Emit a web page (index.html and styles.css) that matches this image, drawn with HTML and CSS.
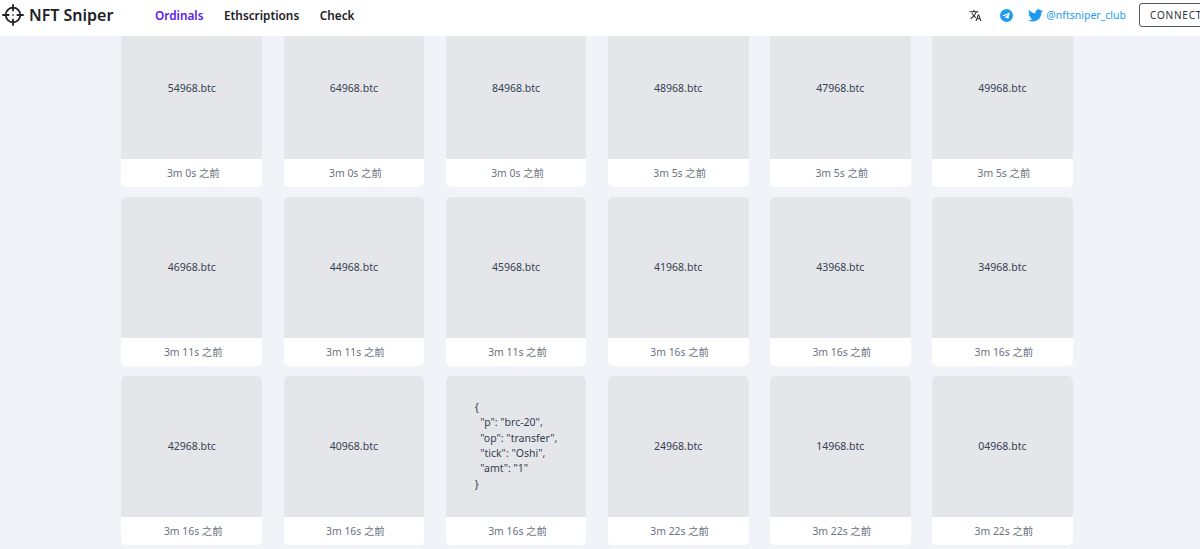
FILE: index.html
```html
<!DOCTYPE html>
<html lang="zh-CN">
<head>
  <meta charset="UTF-8" />
  <meta name="viewport" content="width=device-width, initial-scale=1.0"/>
  <title>NFT Sniper</title>
  <link rel="stylesheet" href="styles.css">
</head>
<body>

  <header class="header">
    <a class="logo" href="#">
      <svg class="logo-icon" viewBox="0 0 22 22" fill="none" stroke="#202124" stroke-width="1.8">
        <circle cx="11" cy="11" r="7.3"/>
        <path d="M11 .3v7M11 14.7v7M.3 11h7M14.7 11h7"/>
        <path d="M11 10.3v1.4" stroke-width="1.4"/>
      </svg>
      <span class="logo-text">NFT Sniper</span>
    </a>

    <nav class="nav">
      <a class="nav-link active" href="#">Ordinals</a>
      <a class="nav-link" href="#">Ethscriptions</a>
      <a class="nav-link" href="#">Check</a>
    </nav>

    <div class="tools">
      <svg class="icon-lang" viewBox="0 0 24 24" fill="#202124">
        <path d="M12.87 15.07l-2.54-2.51.03-.03c1.74-1.94 2.98-4.17 3.71-6.53H17V4h-7V2H8v2H1v1.99h11.17C11.5 7.92 10.44 9.75 9 11.35 8.07 10.32 7.3 9.19 6.69 8h-2c.73 1.63 1.73 3.17 2.98 4.56l-5.09 5.02L4 19l5-5 3.11 3.11.76-2.04zM18.5 10h-2L12 22h2l1.12-3h4.75L21 22h2l-4.500-12zm-2.620 7l1.620-4.330L19.120 17h-3.240z"/>
      </svg>
      <svg class="icon-telegram" viewBox="0 0 24 24">
        <circle cx="12" cy="12" r="12" fill="#1d9bf0"/>
        <path fill="#fff" d="M4.900 11.700l12-4.800c.7-.3 1.200.1 1 1l-2 9.400c-.1.700-.6.900-1.200.500l-3-2.200-1.500 1.400c-.2.200-.3.300-.6.300l.2-3.100 5.600-5.100c.3-.2 0-.4-.3-.2l-7 4.400-3-.900c-.7-.2-.7-.5-.2-.7z"/>
      </svg>
      <a class="twitter" href="#">
        <svg class="icon-twitter" viewBox="0 0 24 24" fill="#1d9bf0">
          <path d="M23.953 4.570a10 10 0 01-2.825.775 4.958 4.958 0 002.163-2.723c-.951.555-2.005.959-3.127 1.184a4.920 4.920 0 00-8.384 4.482C7.690 8.095 4.067 6.130 1.640 3.162a4.822 4.822 0 00-.666 2.475c0 1.710.870 3.213 2.188 4.096a4.904 4.904 0 01-2.228-.616v.060a4.923 4.923 0 003.946 4.827 4.996 4.996 0 01-2.212.085 4.936 4.936 0 004.604 3.417 9.867 9.867 0 01-6.102 2.105c-.390 0-.779-.023-1.170-.067a13.995 13.995 0 007.557 2.209c9.053 0 13.998-7.496 13.998-13.985 0-.210 0-.420-.015-.630A9.935 9.935 0 0024 4.590z"/>
        </svg>
        <span>@nftsniper_club</span>
      </a>
      <button class="connect">CONNECT</button>
    </div>
  </header>

  <main class="grid">
    <div class="card"><div class="preview">54968.btc</div><div class="time">3m 0s 之前</div></div>
    <div class="card"><div class="preview">64968.btc</div><div class="time">3m 0s 之前</div></div>
    <div class="card"><div class="preview">84968.btc</div><div class="time">3m 0s 之前</div></div>
    <div class="card"><div class="preview">48968.btc</div><div class="time">3m 5s 之前</div></div>
    <div class="card"><div class="preview">47968.btc</div><div class="time">3m 5s 之前</div></div>
    <div class="card"><div class="preview">49968.btc</div><div class="time">3m 5s 之前</div></div>

    <div class="card"><div class="preview">46968.btc</div><div class="time">3m 11s 之前</div></div>
    <div class="card"><div class="preview">44968.btc</div><div class="time">3m 11s 之前</div></div>
    <div class="card"><div class="preview">45968.btc</div><div class="time">3m 11s 之前</div></div>
    <div class="card"><div class="preview">41968.btc</div><div class="time">3m 16s 之前</div></div>
    <div class="card"><div class="preview">43968.btc</div><div class="time">3m 16s 之前</div></div>
    <div class="card"><div class="preview">34968.btc</div><div class="time">3m 16s 之前</div></div>

    <div class="card"><div class="preview">42968.btc</div><div class="time">3m 16s 之前</div></div>
    <div class="card"><div class="preview">40968.btc</div><div class="time">3m 16s 之前</div></div>
    <div class="card">
      <div class="preview"><pre class="json">{
  "p": "brc-20",
  "op": "transfer",
  "tick": "Oshi",
  "amt": "1"
}</pre></div>
      <div class="time">3m 16s 之前</div>
    </div>
    <div class="card"><div class="preview">24968.btc</div><div class="time">3m 22s 之前</div></div>
    <div class="card"><div class="preview">14968.btc</div><div class="time">3m 22s 之前</div></div>
    <div class="card"><div class="preview">04968.btc</div><div class="time">3m 22s 之前</div></div>
  </main>

</body>
</html>
```

FILE: styles.css
```css
* {
  box-sizing: border-box;
}
body {
  margin: 0;
  height: 549px;
  overflow: hidden;
  background: #f2f3f8;
  font-family: "Segoe UI", "Noto Sans", "Noto Sans CJK SC", sans-serif;
  font-size: 11px;
  color: #374151;
}
a {
  color: inherit;
  text-decoration: none;
}
svg {
  display: block;
  flex: none;
}
.header {
  position: fixed;
  top: 0;
  left: 0;
  z-index: 10;
  display: flex;
  align-items: center;
  width: 1216px;
  height: 36px;
  padding: 0 0 6px 2px;
  background: #fff;
  color: #202124;
}
.logo {
  display: flex;
  align-items: center;
  width: 153px;
}
.logo-icon {
  width: 22px;
  height: 22px;
  margin-right: 5px;
}
.logo-text {
  font-size: 16px;
  font-weight: 600;
  white-space: nowrap;
}
.nav {
  display: flex;
  gap: 20.5px;
  font-size: 11.8px;
  font-weight: 600;
}
.nav-link.active {
  color: #5b21f0;
}
.tools {
  display: flex;
  align-items: center;
  margin-left: auto;
}
.icon-lang {
  width: 13px;
  height: 13px;
  margin-right: 18px;
}
.icon-telegram {
  width: 13px;
  height: 13px;
  margin-right: 15px;
}
.twitter {
  display: flex;
  align-items: center;
  gap: 3px;
  margin-right: 13px;
  font-size: 10.5px;
  color: #1d9bf0;
}
.icon-twitter {
  width: 15px;
  height: 15px;
}
.connect {
  width: 77px;
  height: 24px;
  padding: 0 0 0 10px;
  border: 1px solid #55585c;
  border-radius: 3px;
  background: #fff;
  font-family: inherit;
  font-size: 10px;
  letter-spacing: 0.8px;
  text-align: left;
  color: #303236;
}
.grid {
  display: grid;
  grid-template-columns: repeat(6, 140.8px);
  gap: 10.2px 21.33px;
  padding: 17.8px 0 0 121.4px;
}
.card {
  overflow: hidden;
  border-radius: 5px;
  background: #fff;
}
.preview {
  display: flex;
  align-items: center;
  justify-content: center;
  height: 140.8px;
  padding-bottom: 1px;
  background: #e5e6ea;
  font-size: 10.5px;
}
.json {
  margin: 0;
  font-family: inherit;
  line-height: 15.4px;
}
.time {
  height: 28.2px;
  padding-left: 3px;
  font-size: 10.4px;
  line-height: 28px;
  text-align: center;
  color: #6b7280;
}
```
